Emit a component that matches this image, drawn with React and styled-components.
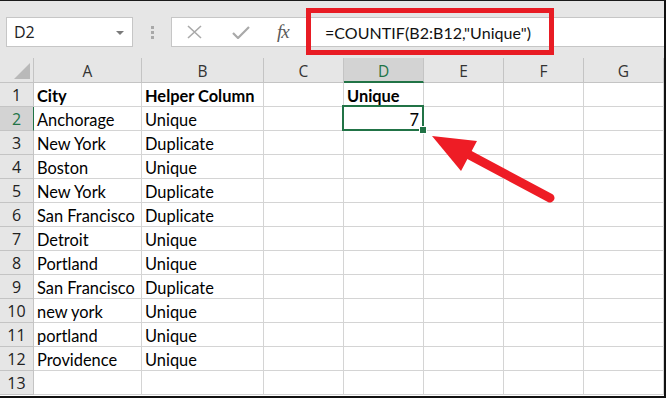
import React from 'react'
import styled, { createGlobalStyle } from 'styled-components'

const GlobalStyle = createGlobalStyle`
  html, body { margin: 0; padding: 0; background: #fff; }
  * { box-sizing: border-box; }
`

const columns = [
  { id: 'A', width: 108 },
  { id: 'B', width: 122 },
  { id: 'C', width: 80 },
  { id: 'D', width: 80 },
  { id: 'E', width: 80 },
  { id: 'F', width: 80 },
  { id: 'G', width: 80 },
]

const rows = [
  ['City', 'Helper Column', '', 'Unique'],
  ['Anchorage', 'Unique', '', '7'],
  ['New York', 'Duplicate'],
  ['Boston', 'Unique'],
  ['New York', 'Duplicate'],
  ['San Francisco', 'Duplicate'],
  ['Detroit', 'Unique'],
  ['Portland', 'Unique'],
  ['San Francisco', 'Duplicate'],
  ['new york', 'Unique'],
  ['portland', 'Unique'],
  ['Providence', 'Unique'],
  [],
]

const Frame = styled.div`
  position: relative;
  width: 666px;
  height: 398px;
  overflow: hidden;
  background: #e6e6e6;
  border-top: 1px solid #1a1a1a;
  border-right: 2px solid #111;
  border-bottom: 2px solid #111;
  font-family: 'Lato', 'Liberation Sans', sans-serif;
`

const Toolbar = styled.div`
  height: 57px;
  display: flex;
  align-items: flex-start;
  padding: 16px 0 0 6px;
`

const NameBox = styled.div`
  width: 127px;
  height: 30px;
  background: #fff;
  border: 1px solid #c6c6c6;
  display: flex;
  align-items: center;
  justify-content: space-between;
  padding: 0 8px 0 7px;
  font-family: 'Open Sans', 'Liberation Sans', sans-serif;
  font-size: 16px;
  color: #222;
`

const Caret = styled.span`
  width: 0;
  height: 0;
  border-left: 4px solid transparent;
  border-right: 4px solid transparent;
  border-top: 4px solid #7a7a7a;
  margin-top: 2px;
`

const Grip = styled.div`
  width: 38px;
  height: 30px;
  display: flex;
  flex-direction: column;
  align-items: center;
  justify-content: center;
  gap: 2px;
  span {
    width: 3px;
    height: 3px;
    background: #a8a8a8;
  }
`

const FormulaBar = styled.div`
  flex: 1;
  height: 30px;
  background: #fff;
  border: 1px solid #c6c6c6;
  border-right: none;
  display: flex;
  align-items: center;
`

const FxButtons = styled.div`
  width: 137px;
  display: flex;
  align-items: center;
  padding-left: 15px;
  gap: 30px;
  color: #a9a9a9;
`

const Fx = styled.span`
  font-family: 'Liberation Serif', serif;
  font-style: italic;
  font-size: 19px;
  color: #5a5a5a;
  letter-spacing: -1px;
  margin-left: -3px;
`

const FormulaText = styled.div`
  padding-left: 16px;
  font-size: 16px;
  letter-spacing: 0.05px;
  color: #111;
  white-space: nowrap;
`

const Sheet = styled.div`
  display: grid;
  grid-template-columns: 34px ${columns.map((c) => c.width + 'px').join(' ')};
  grid-auto-rows: 24px;
  grid-template-rows: 25px;
  height: 338px;
  overflow: hidden;
  background: #fff;
`

const Corner = styled.div`
  background: #e6e6e6;
  border-right: 1px solid #c4c4c4;
  border-bottom: 1px solid #c4c4c4;
  position: relative;
  svg { position: absolute; right: 3px; bottom: 3px; }
`

const ColHead = styled.div`
  background: ${(p) => (p.$active ? '#d3d3d3' : '#e6e6e6')};
  color: ${(p) => (p.$active ? '#217346' : '#333')};
  border-right: 1px solid #c4c4c4;
  border-bottom: ${(p) => (p.$active ? '2px solid #217346' : '1px solid #c4c4c4')};
  display: flex;
  align-items: center;
  justify-content: center;
  font-family: 'Open Sans', 'Liberation Sans', sans-serif;
  font-size: 15.5px;
  padding-top: 2px;
`

const RowHead = styled.div`
  background: ${(p) => (p.$active ? '#d3d3d3' : '#e6e6e6')};
  color: ${(p) => (p.$active ? '#217346' : '#222')};
  border-right: ${(p) => (p.$active ? '1px solid #217346' : '1px solid #c4c4c4')};
  border-bottom: 1px solid #c4c4c4;
  display: flex;
  align-items: center;
  justify-content: center;
  font-family: 'Open Sans', 'Liberation Sans', sans-serif;
  font-size: 16px;
  padding-top: 1px;
`

const Cell = styled.div`
  position: relative;
  border-right: 1px solid #d4d4d4;
  border-bottom: 1px solid #d4d4d4;
  display: flex;
  align-items: center;
  justify-content: ${(p) => (p.$right ? 'flex-end' : 'flex-start')};
  padding: 1px 4px 0 3px;
  font-size: 16.4px;
  font-weight: ${(p) => (p.$bold ? 700 : 400)};
  color: #000;
  white-space: nowrap;
  overflow: visible;
  ${(p) =>
    p.$selected &&
    `
    &::after {
      content: '';
      position: absolute;
      top: -2px;
      left: -2px;
      right: -1px;
      bottom: -1px;
      border: 2px solid #217346;
      pointer-events: none;
    }
    &::before {
      content: '';
      position: absolute;
      right: -4px;
      bottom: -4px;
      width: 6px;
      height: 6px;
      background: #217346;
      border: 1px solid #fff;
      z-index: 2;
    }
  `}
`

const Highlight = styled.div`
  position: absolute;
  left: 306px;
  top: 7px;
  width: 248px;
  height: 47px;
  border: 5px solid #e81c24;
  pointer-events: none;
`

const Arrow = styled.svg`
  position: absolute;
  left: 0;
  top: 0;
  pointer-events: none;
`

export default function App() {
  return (
    <>
      <GlobalStyle />
      <Frame>
        <Toolbar>
          <NameBox>
            D2
            <Caret />
          </NameBox>
          <Grip>
            <span />
            <span />
            <span />
          </Grip>
          <FormulaBar>
            <FxButtons>
              <svg width="15" height="14" viewBox="0 0 15 14">
                <path d="M1 1 L14 13 M14 1 L1 13" stroke="currentColor" strokeWidth="1.6" fill="none" />
              </svg>
              <svg width="18" height="13" viewBox="0 0 18 13">
                <path d="M1 7 L6 12 L17 1" stroke="currentColor" strokeWidth="2.2" fill="none" />
              </svg>
              <Fx>fx</Fx>
            </FxButtons>
            <FormulaText>=COUNTIF(B2:B12,"Unique")</FormulaText>
          </FormulaBar>
        </Toolbar>

        <Sheet>
          <Corner>
            <svg width="16" height="16" viewBox="0 0 16 16">
              <path d="M16 0 L16 16 L0 16 Z" fill="#b9b9b9" />
            </svg>
          </Corner>
          {columns.map((c) => (
            <ColHead key={c.id} $active={c.id === 'D'}>
              {c.id}
            </ColHead>
          ))}
          {rows.map((r, i) => (
            <React.Fragment key={i}>
              <RowHead $active={i === 1}>{i + 1}</RowHead>
              {columns.map((c, j) => {
                const value = r[j] || ''
                const isNumber = /^\d+$/.test(value)
                return (
                  <Cell
                    key={c.id}
                    $bold={i === 0}
                    $right={isNumber}
                    $selected={i === 1 && c.id === 'D'}
                  >
                    {value}
                  </Cell>
                )
              })}
            </React.Fragment>
          ))}
        </Sheet>

        <Highlight />
        <Arrow width="666" height="398" viewBox="0 0 666 398">
          <line x1="550" y1="197" x2="462" y2="150" stroke="#ee1c25" strokeWidth="9" strokeLinecap="round" />
          <polygon points="432,135 477,140 461,170" fill="#ee1c25" />
        </Arrow>
      </Frame>
    </>
  )
}
